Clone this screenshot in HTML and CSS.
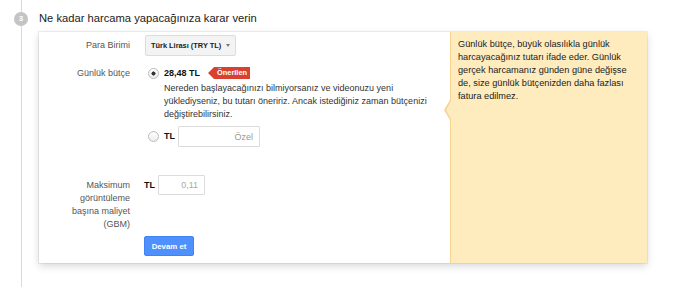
FILE: index.html
```html
<!DOCTYPE html>
<html lang="tr">
<head>
    <meta charset="UTF-8">
    <title>Bütçe</title>
    <link rel="stylesheet" href="styles.css">
</head>
<body>
    <div class="step">
        <span class="step-num">3</span>
        <h2 class="step-title">Ne kadar harcama yapacağınıza karar verin</h2>

        <div class="card">
            <div class="form">
                <div class="row row-currency">
                    <div class="label">Para Birimi</div>
                    <div class="control">
                        <div class="select">Türk Lirası (TRY TL)<span class="caret"></span></div>
                    </div>
                </div>

                <div class="row row-budget">
                    <div class="label">Günlük bütçe</div>
                    <div class="control">
                        <label class="option">
                            <input type="radio" name="budget" checked>
                            <span class="amount">28,48 TL</span>
                            <span class="badge">Önerilen</span>
                        </label>
                        <p class="hint">Nereden başlayacağınızı bilmiyorsanız ve videonuzu yeni yüklediyseniz, bu tutarı öneririz. Ancak istediğiniz zaman bütçenizi değiştirebilirsiniz.</p>
                        <label class="option option-custom">
                            <input type="radio" name="budget">
                            <span class="currency">TL</span>
                            <input type="text" class="field field-custom" placeholder="Özel">
                        </label>
                    </div>
                </div>

                <div class="row row-cpv">
                    <div class="label label-cpv">Maksimum görüntüleme başına maliyet (GBM)</div>
                    <div class="control control-cpv">
                        <span class="currency">TL</span>
                        <input type="text" class="field field-cpv" value="0,11">
                    </div>
                </div>

                <div class="row row-submit">
                    <div></div>
                    <div class="control">
                        <button class="btn">Devam et</button>
                    </div>
                </div>
            </div>

            <div class="tip">
                Günlük bütçe, büyük olasılıkla günlük harcayacağınız tutarı ifade eder. Günlük gerçek harcamanız günden güne değişse de, size günlük bütçenizden daha fazlası fatura edilmez.
            </div>
        </div>
    </div>
</body>
</html>
```

FILE: styles.css
```css
/* Reset */
body, h2, p {
    margin: 0;
    padding: 0;
}

body {
    font-family: "Liberation Sans", Arial, sans-serif;
    background-color: #fff;
    color: #333;
}

/* Step with timeline */
.step {
    position: relative;
    margin-left: 21px;
    border-left: 1px solid #dadada;
    padding: 10px 0 0 17px;
    min-height: 277px;
}

.step-num {
    position: absolute;
    left: -8px;
    top: 12px;
    width: 14px;
    height: 14px;
    border-radius: 50%;
    background-color: #c4c4c4;
    color: #fff;
    font-size: 8px;
    font-weight: bold;
    line-height: 14px;
    text-align: center;
}

.step-title {
    font-size: 11.2px;
    font-weight: normal;
    line-height: 16px;
    color: #1a1a1a;
}

/* Card */
.card {
    display: flex;
    width: 608px;
    margin-top: 6px;
    background-color: #fff;
    box-shadow: 0 0 0 1px rgba(0, 0, 0, 0.06), 0 3px 8px rgba(0, 0, 0, 0.16);
}

.form {
    width: 411px;
    box-sizing: border-box;
    padding: 3px 14px 7px 0;
    font-size: 9px;
    line-height: 13px;
}

.row {
    display: grid;
    grid-template-columns: 91px 1fr;
    column-gap: 14px;
}

.label {
    text-align: right;
    color: #555;
}

.row-currency .label {
    align-self: center;
}

.row-budget {
    margin-top: 10px;
}

.row-budget .label {
    line-height: 14px;
}

.row-cpv {
    margin-top: 28px;
}

.label-cpv {
    padding-top: 4px;
    justify-self: end;
    max-width: 60px;
}

.row-submit {
    margin-top: 5px;
}

/* Currency select */
.select {
    display: inline-flex;
    align-items: center;
    box-sizing: border-box;
    width: 91px;
    height: 21px;
    margin-left: 1px;
    padding: 0 5px;
    background-color: #f3f3f3;
    border: 1px solid #dcdcdc;
    border-radius: 2px;
    font-size: 7.4px;
    font-weight: bold;
    color: #222;
}

.caret {
    margin-left: auto;
    border-left: 2.5px solid transparent;
    border-right: 2.5px solid transparent;
    border-top: 3px solid #777;
}

/* Radio options */
.option {
    display: flex;
    align-items: center;
    height: 14px;
}

.option input[type="radio"] {
    appearance: none;
    -webkit-appearance: none;
    width: 11px;
    height: 11px;
    margin: 0 5px 0 4px;
    border: 1px solid #bcbcbc;
    border-radius: 50%;
    background: linear-gradient(#fff, #ececec);
}

.option input[type="radio"]:checked {
    background: radial-gradient(circle, #333 0, #333 1.8px, transparent 2.3px), linear-gradient(#fff, #ececec);
}

.amount {
    font-weight: bold;
    color: #111;
}

.badge {
    margin-left: 8px;
    height: 12px;
    padding: 0 3px 0 9px;
    background-color: #d8412f;
    color: #fff;
    font-size: 7.4px;
    font-weight: bold;
    line-height: 12px;
    clip-path: polygon(0 50%, 6px 0, 100% 0, 100% 100%, 6px 100%);
}

.hint {
    margin: 2px 0 0 20px;
    max-width: 278px;
    color: #333;
}

.option-custom {
    margin-top: 5px;
    height: 21px;
}

.currency {
    font-weight: bold;
    color: #111;
}

.field {
    box-sizing: border-box;
    margin-left: 3px;
    border: 1px solid #dcdcdc;
    border-radius: 1px;
    padding: 0 6px;
    font-family: inherit;
    font-size: 9px;
    text-align: right;
    color: #aaa;
    outline: none;
}

.field::placeholder {
    color: #999;
}

.field-custom {
    width: 82px;
    height: 21px;
}

.control-cpv {
    display: flex;
    align-items: center;
    height: 20px;
}

.field-cpv {
    width: 47px;
    height: 20px;
}

/* Button */
.btn {
    width: 50px;
    height: 20px;
    padding: 0;
    background-color: #4d90fe;
    border: 1px solid #3f84f2;
    border-radius: 2px;
    color: #fff;
    font-family: inherit;
    font-size: 7.8px;
    font-weight: bold;
    cursor: pointer;
}

/* Yellow tip panel */
.tip {
    position: relative;
    flex: 1;
    padding: 6px 15px 0 7px;
    background-color: #feebbe;
    border-left: 1px solid #f6d291;
    font-size: 9.2px;
    line-height: 13px;
    color: #222;
}

.tip::before,
.tip::after {
    content: "";
    position: absolute;
    border-style: solid;
    border-color: transparent;
}

.tip::before {
    left: -7px;
    top: 68px;
    border-width: 10px 6px 10px 0;
    border-right-color: #f6d291;
}

.tip::after {
    left: -5px;
    top: 69px;
    border-width: 9px 5px 9px 0;
    border-right-color: #feebbe;
}
```
